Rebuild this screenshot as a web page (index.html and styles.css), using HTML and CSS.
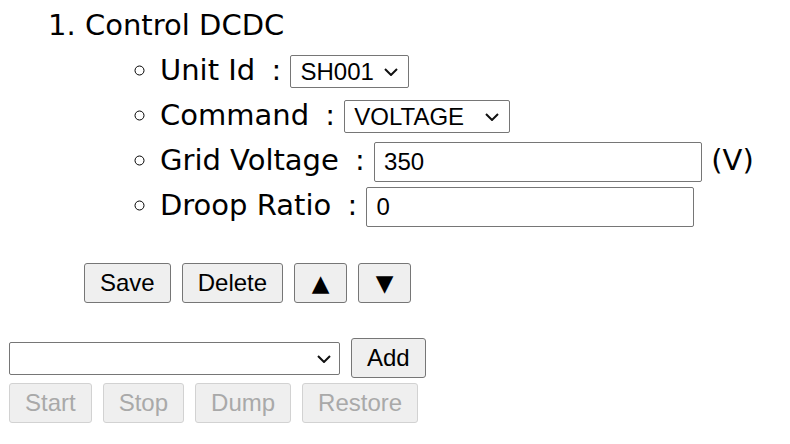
FILE: index.html
```html
<!DOCTYPE html>
<html>
<head>
<meta charset="utf-8">
<link rel="stylesheet" href="styles.css">
</head>
<body>
<ol class="steps">
  <li>Control DCDC
    <ul class="params">
      <li>Unit Id <span class="sep">:</span> <span class="selwrap sel-unit"><select class="sel"><option>SH001</option></select><svg class="chev" width="14" height="8" viewBox="0 0 14 8"><path d="M1 1 L7 7 L13 1" fill="none" stroke="#111" stroke-width="2"/></svg></span></li>
      <li>Command <span class="sep">:</span> <span class="selwrap sel-cmd"><select class="sel"><option>VOLTAGE</option></select><svg class="chev" width="14" height="8" viewBox="0 0 14 8"><path d="M1 1 L7 7 L13 1" fill="none" stroke="#111" stroke-width="2"/></svg></span></li>
      <li>Grid Voltage <span class="sep">:</span> <input class="field" type="text" value="350"> (V)</li>
      <li>Droop Ratio <span class="sep">:</span> <input class="field" type="text" value="0"></li>
    </ul>
    <div class="actions">
      <button class="btn">Save</button>
      <button class="btn">Delete</button>
      <button class="btn arrow">▲</button>
      <button class="btn arrow">▼</button>
    </div>
  </li>
</ol>
<div class="adder">
  <span class="selwrap sel-wide"><select class="sel"><option></option></select><svg class="chev" width="14" height="8" viewBox="0 0 14 8"><path d="M1 1 L7 7 L13 1" fill="none" stroke="#111" stroke-width="2"/></svg></span>
  <button class="btn">Add</button>
</div>
<div class="run">
  <button class="btn" disabled>Start</button>
  <button class="btn" disabled>Stop</button>
  <button class="btn" disabled>Dump</button>
  <button class="btn" disabled>Restore</button>
</div>
</body>
</html>
```

FILE: styles.css
```css
html, body {
  margin: 0;
  background: #fff;
}
body {
  padding: 3px 0 0 9px;
  font-family: "DejaVu Sans", sans-serif;
  font-size: 29px;
  line-height: 45px;
  color: #000;
}
.steps {
  margin: 0;
  padding-left: 76px;
}
.params {
  margin: 0;
  padding-left: 75px;
  list-style-type: circle;
}
.sep {
  margin-left: 7px;
}
.selwrap {
  position: relative;
  display: inline-block;
}
.sel {
  -webkit-appearance: none;
  appearance: none;
  display: block;
  box-sizing: border-box;
  height: 33px;
  margin: 0;
  padding: 0 0 0 9px;
  border: 1px solid #767676;
  border-radius: 2px;
  background: #fff;
  color: #000;
  font-family: "Liberation Sans", Arial, sans-serif;
  font-size: 24px;
  line-height: 31px;
}
.selwrap .chev {
  position: absolute;
  right: 11px;
  top: 13px;
  pointer-events: none;
}
.sel-unit .sel { width: 119px; }
.sel-cmd .sel { width: 166px; }
.sel-wide .sel { width: 331px; }
.sel-wide .chev { right: 9px; }
.field {
  box-sizing: border-box;
  width: 328px;
  height: 40px;
  margin: 0;
  padding: 0 9px;
  border: 1px solid #767676;
  border-radius: 2px;
  font-family: "Liberation Sans", Arial, sans-serif;
  font-size: 24px;
  color: #000;
  vertical-align: baseline;
}
.btn {
  box-sizing: border-box;
  height: 40px;
  margin: 0;
  padding: 0 15px;
  border: 1px solid #767676;
  border-radius: 3px;
  background: #efefef;
  color: #000;
  font-family: "Liberation Sans", Arial, sans-serif;
  font-size: 24px;
  line-height: 38px;
}
.btn.arrow {
  width: 53px;
  padding: 0;
  font-family: "DejaVu Sans", sans-serif;
  font-size: 23px;
}
.btn:disabled {
  background: #efefef;
  border-color: #d2d2d2;
  color: #a9a9a9;
}
.actions {
  display: flex;
  gap: 11px;
  margin-top: 35px;
  margin-left: -1px;
}
.adder {
  display: flex;
  align-items: center;
  gap: 11px;
  margin-top: 35px;
}
.run {
  display: flex;
  gap: 11px;
  margin-top: 5px;
}
```
